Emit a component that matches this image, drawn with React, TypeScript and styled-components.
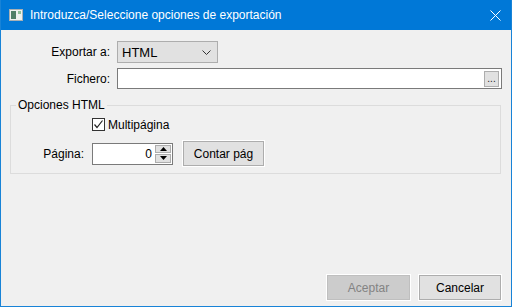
import React from "react";
import styled, { createGlobalStyle } from "styled-components";

const GlobalStyle = createGlobalStyle`
  html, body {
    margin: 0;
    padding: 0;
    background: #f0f0f0;
  }
  body {
    font-family: "Liberation Sans", Arial, sans-serif;
    font-size: 12px;
    color: #000;
  }
`;

const Window = styled.div`
  width: 512px;
  height: 307px;
  box-sizing: border-box;
  border: 1px solid #1883d7;
  border-top: none;
  display: flex;
  flex-direction: column;
  background: #f0f0f0;
`;

const TitleBar = styled.div`
  height: 30px;
  background: #0078d7;
  display: flex;
  align-items: center;
  padding: 0 0 0 8px;
  color: #fff;
  flex-shrink: 0;
`;

const TitleText = styled.span`
  margin-left: 7px;
  font-size: 12px;
  flex: 1;
`;

const CloseButton = styled.div`
  width: 46px;
  height: 30px;
  display: flex;
  align-items: center;
  justify-content: center;
  margin-right: -7px;
`;

const Body = styled.div`
  flex: 1;
  display: flex;
  flex-direction: column;
  padding: 11px 9px 6px 9px;
`;

const FormGrid = styled.div`
  display: grid;
  grid-template-columns: 100px 1fr;
  column-gap: 7px;
  row-gap: 5px;
  align-items: center;
`;

const Label = styled.label`
  text-align: right;
  white-space: nowrap;
`;

const Combo = styled.div`
  width: 101px;
  height: 22px;
  box-sizing: border-box;
  background: #e1e1e1;
  border: 1px solid #adadad;
  display: flex;
  align-items: center;
  justify-content: space-between;
  padding: 0 6px 0 4px;
  font-size: 13px;
`;

const TextField = styled.div`
  height: 21px;
  box-sizing: border-box;
  background: #fff;
  border: 1px solid #7a7a7a;
  display: flex;
  align-items: center;
  justify-content: flex-end;
  padding-right: 2px;
`;

const BrowseButton = styled.div`
  width: 15px;
  height: 16px;
  box-sizing: border-box;
  background: #e1e1e1;
  border: 1px solid #adadad;
  font-size: 10px;
  line-height: 10px;
  color: #222;
  display: flex;
  align-items: flex-end;
  justify-content: center;
  padding-bottom: 2px;
  overflow: hidden;
`;

const GroupBox = styled.fieldset`
  margin: 9px 1px 0 0;
  padding: 0 0 7px 0;
  border: 1px solid #dcdcdc;
  min-width: 0;
`;

const Legend = styled.legend`
  margin-left: 5px;
  padding: 0 2px;
  line-height: 14px;
  font-size: 12px;
`;

const GroupGrid = styled.div`
  display: grid;
  grid-template-columns: 73px auto;
  column-gap: 8px;
  row-gap: 10px;
  align-items: center;
  padding-top: 6px;
`;

const CheckRow = styled.div`
  grid-column: 2;
  display: flex;
  align-items: center;
  gap: 3px;
  height: 13px;
`;

const CheckBox = styled.div`
  width: 13px;
  height: 13px;
  box-sizing: border-box;
  border: 1px solid #333;
  background: #fff;
  display: flex;
  align-items: center;
  justify-content: center;
`;

const PageRow = styled.div`
  display: flex;
  align-items: center;
  gap: 10px;
`;

const SpinBox = styled.div`
  width: 81px;
  height: 22px;
  box-sizing: border-box;
  background: #fff;
  border: 1px solid #7a7a7a;
  display: flex;
  align-items: stretch;
`;

const SpinValue = styled.div`
  flex: 1;
  text-align: right;
  padding-right: 3px;
  line-height: 20px;
`;

const SpinButtons = styled.div`
  width: 16px;
  display: flex;
  flex-direction: column;
  gap: 1px;
  padding: 1px 1px 1px 0;
`;

const SpinArrow = styled.div`
  flex: 1;
  background: #e1e1e1;
  border: 1px solid #adadad;
  display: flex;
  align-items: center;
  justify-content: center;
`;

const Button = styled.div<{ $disabled?: boolean; $width: number }>`
  width: ${(p) => p.$width}px;
  height: 25px;
  box-sizing: border-box;
  display: flex;
  align-items: center;
  justify-content: center;
  background: ${(p) => (p.$disabled ? "#cccccc" : "#e1e1e1")};
  border: 1px solid ${(p) => (p.$disabled ? "#bfbfbf" : "#adadad")};
  color: ${(p) => (p.$disabled ? "#838383" : "#000")};
  box-shadow: 0 0 0 1px #fff;
`;

const Footer = styled.div`
  margin-top: auto;
  display: flex;
  justify-content: flex-end;
  gap: 9px;
  padding-right: 1px;
`;

const AppIcon = () => (
  <svg width="14" height="12" viewBox="0 0 14 12">
    <rect x="0.5" y="0.5" width="13" height="11" fill="#eef1ee" stroke="#a8b0b4" />
    <rect x="2" y="2" width="5" height="8" fill="#4f7f66" />
    <rect x="9" y="2" width="3" height="3" fill="#8fbf98" />
  </svg>
);

const CloseIcon = () => (
  <svg width="11" height="11" viewBox="0 0 11 11">
    <path d="M0.5 0.5 L10.5 10.5 M10.5 0.5 L0.5 10.5" stroke="#fff" strokeWidth="1" />
  </svg>
);

const Chevron = () => (
  <svg width="9" height="5" viewBox="0 0 9 5">
    <path d="M0.5 0.5 L4.5 4.5 L8.5 0.5" stroke="#333" fill="none" strokeWidth="1" />
  </svg>
);

const Check = () => (
  <svg width="11" height="11" viewBox="0 0 11 11">
    <path d="M1.5 5.5 L4 8.5 L9.5 1.5" stroke="#222" fill="none" strokeWidth="1.2" />
  </svg>
);

const Triangle: React.FC<{ up?: boolean }> = ({ up }) => (
  <svg width="7" height="4" viewBox="0 0 7 4">
    <path d={up ? "M0 4 L3.5 0 L7 4 Z" : "M0 0 L3.5 4 L7 0 Z"} fill="#000" />
  </svg>
);

const App: React.FC = () => {
  return (
    <>
      <GlobalStyle />
      <Window>
        <TitleBar>
          <AppIcon />
          <TitleText>Introduzca/Seleccione opciones de exportación</TitleText>
          <CloseButton>
            <CloseIcon />
          </CloseButton>
        </TitleBar>

        <Body>
          <FormGrid>
            <Label>Exportar a:</Label>
            <Combo>
              <span>HTML</span>
              <Chevron />
            </Combo>
            <Label>Fichero:</Label>
            <TextField>
              <BrowseButton>...</BrowseButton>
            </TextField>
          </FormGrid>

          <GroupBox>
            <Legend>Opciones HTML</Legend>
            <GroupGrid>
              <CheckRow>
                <CheckBox>
                  <Check />
                </CheckBox>
                <span>Multipágina</span>
              </CheckRow>
              <Label>Página:</Label>
              <PageRow>
                <SpinBox>
                  <SpinValue>0</SpinValue>
                  <SpinButtons>
                    <SpinArrow>
                      <Triangle up />
                    </SpinArrow>
                    <SpinArrow>
                      <Triangle />
                    </SpinArrow>
                  </SpinButtons>
                </SpinBox>
                <Button $width={81}>Contar pág</Button>
              </PageRow>
            </GroupGrid>
          </GroupBox>

          <Footer>
            <Button $width={83} $disabled>
              Aceptar
            </Button>
            <Button $width={82}>Cancelar</Button>
          </Footer>
        </Body>
      </Window>
    </>
  );
};

export default App;
